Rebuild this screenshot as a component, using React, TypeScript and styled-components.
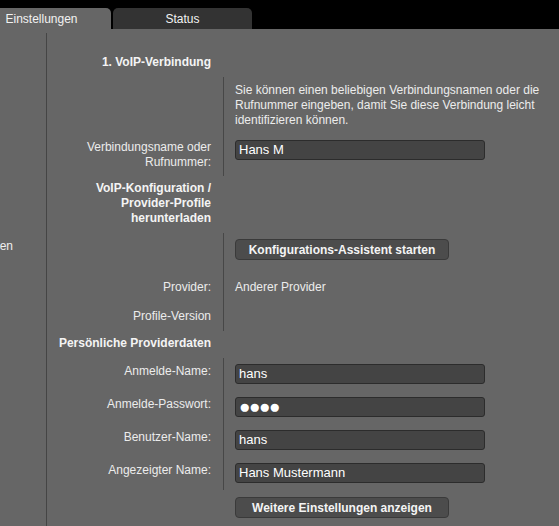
import React from "react";
import styled, { createGlobalStyle } from "styled-components";

const GlobalStyle = createGlobalStyle`
  html, body {
    margin: 0;
    padding: 0;
    background: #666666;
    overflow: hidden;
  }
  body {
    font-family: "Liberation Sans", Arial, sans-serif;
    font-size: 12px;
    color: #eeeeee;
  }
`;

const Page = styled.div`
  min-height: 526px;
  display: flex;
  flex-direction: column;
`;

const TopBar = styled.div`
  height: 29px;
  background: #000;
  padding-top: 8px;
  box-sizing: border-box;
  display: flex;
  gap: 2px;
`;

const Tab = styled.div<{ $active?: boolean }>`
  flex: 0 0 139px;
  height: 21px;
  line-height: 22px;
  text-align: center;
  border-radius: 5px 5px 0 0;
  background: ${(p) => (p.$active ? "#666666" : "#333333")};
  color: #f2f2f2;
  font-size: 12px;
  &:first-child {
    margin-left: -28px;
  }
`;

const Body = styled.div`
  display: flex;
  flex: 1;
`;

const SideNav = styled.nav`
  flex: 0 0 46px;
  margin-top: 4px;
  border-right: 1px solid #454545;
  padding-top: 206px;
  overflow: hidden;
`;

// menu is scrolled sideways, so only the tail of the entry shows
const NavItem = styled.div`
  display: flex;
  justify-content: flex-end;
  padding-right: 33px;
  line-height: 15px;
  white-space: nowrap;
  color: #eeeeee;
`;

const Main = styled.main`
  flex: 1;
  padding-top: 21px;
  padding-right: 4px;
`;

const Heading = styled.div`
  width: 164px;
  padding: 5px 0 7px;
  text-align: right;
  font-weight: bold;
  line-height: 15px;
  color: #f4f4f4;
`;

const Row = styled.div<{ $pt: number; $pb: number }>`
  display: grid;
  grid-template-columns: 164px 1fr;
  column-gap: 12px;
  & > * {
    padding-top: ${(p) => p.$pt}px;
    padding-bottom: ${(p) => p.$pb}px;
  }
`;

const Label = styled.div`
  text-align: right;
  line-height: 15px;
  color: #ececec;
`;

const Value = styled.div<{ $plain?: boolean }>`
  border-left: 1px solid ${(p) => (p.$plain ? "transparent" : "#474747")};
  padding-left: 11px;
  line-height: 15px;
  color: #ececec;
`;

const Field = styled.input<{ $dots?: boolean }>`
  display: block;
  box-sizing: border-box;
  width: 250px;
  height: 20px;
  margin: 0;
  padding: 0 4px 1px 3px;
  border: 1px solid #2c2c2c;
  border-radius: 3px;
  background: #444444;
  color: #ffffff;
  font-family: "Liberation Sans", Arial, sans-serif;
  font-size: ${(p) => (p.$dots ? "19px" : "13px")};
  letter-spacing: ${(p) => (p.$dots ? "-1.5px" : "0")};
  outline: none;
`;

const Button = styled.button`
  display: block;
  box-sizing: border-box;
  width: 214px;
  height: 21px;
  margin: 0;
  padding: 0;
  border: 1px solid #3a3a3a;
  border-radius: 4px;
  background: #4c4c4c;
  color: #f4f4f4;
  font-family: "Liberation Sans", Arial, sans-serif;
  font-size: 12px;
  font-weight: bold;
  cursor: pointer;
`;

const personal = [
  { label: "Anmelde-Name:", value: "hans" },
  { label: "Anmelde-Passwort:", value: "●●●●", secret: true },
  { label: "Benutzer-Name:", value: "hans" },
  { label: "Angezeigter Name:", value: "Hans Mustermann" },
];

export default function App() {
  return (
    <Page>
      <GlobalStyle />
      <TopBar>
        <Tab $active>Einstellungen</Tab>
        <Tab>Status</Tab>
      </TopBar>
      <Body>
        <SideNav>
          <NavItem>Verbindungen</NavItem>
        </SideNav>
        <Main>
          <Heading>1. VoIP-Verbindung</Heading>
          <div>
            <Row $pt={6} $pb={6}>
              <Label />
              <Value>
                Sie können einen beliebigen Verbindungsnamen oder die
                Rufnummer eingeben, damit Sie diese Verbindung leicht
                identifizieren können.
              </Value>
            </Row>
            <Row $pt={6} $pb={6}>
              <Label>
                Verbindungsname oder
                <br />
                Rufnummer:
              </Label>
              <Value>
                <Field readOnly defaultValue="Hans M" />
              </Value>
            </Row>
          </div>

          <Heading>
            VoIP-Konfiguration /<br />
            Provider-Profile
            <br />
            herunterladen
          </Heading>
          <div>
            <Row $pt={6} $pb={13}>
              <Label />
              <Value>
                <Button type="button">Konfigurations-Assistent starten</Button>
              </Value>
            </Row>
            <Row $pt={7} $pb={7}>
              <Label>Provider:</Label>
              <Value>Anderer Provider</Value>
            </Row>
            <Row $pt={7} $pb={7}>
              <Label>Profile-Version</Label>
              <Value />
            </Row>
          </div>

          <Heading>Persönliche Providerdaten</Heading>
          <div>
            {personal.map((f) => (
              <Row key={f.label} $pt={6} $pb={7}>
                <Label>{f.label}</Label>
                <Value>
                  <Field readOnly defaultValue={f.value} $dots={f.secret} />
                </Value>
              </Row>
            ))}
          </div>
          <Row $pt={7} $pb={8}>
            <Label />
            <Value $plain>
              <Button type="button">Weitere Einstellungen anzeigen</Button>
            </Value>
          </Row>
        </Main>
      </Body>
    </Page>
  );
}
